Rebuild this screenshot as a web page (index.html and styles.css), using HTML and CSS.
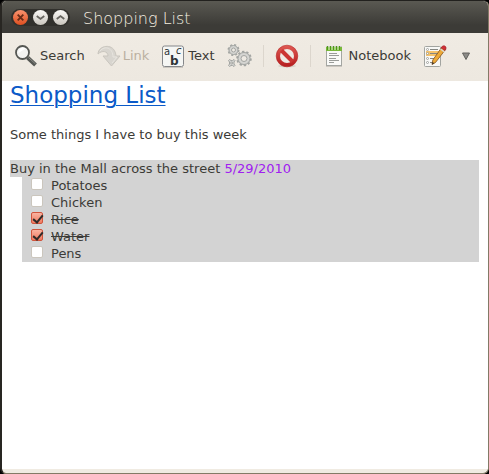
FILE: index.html
```
<!DOCTYPE html>
<html lang="en">
<head>
<meta charset="utf-8">
<title>Shopping List</title>
<link rel="stylesheet" href="styles.css">
</head>
<body>
<div class="window">
  <header class="titlebar">
    <div class="controls">
      <button class="control close" type="button" aria-label="Close"><svg viewBox="0 0 16 16"><path d="M5 5l6 6M11 5l-6 6"/></svg></button>
      <button class="control" type="button" aria-label="Minimize"><svg viewBox="0 0 16 16"><path d="M4 6.500L8 9.500l4-3"/></svg></button>
      <button class="control" type="button" aria-label="Maximize"><svg viewBox="0 0 16 16"><path d="M4 9.500L8 6.500l4 3"/></svg></button>
    </div>
    <span class="caption">Shopping List</span>
  </header>
  <nav class="toolbar">
    <button class="tool" type="button">
      <svg class="icon" viewBox="0 0 24 24"><path d="M13.500 13.500l8 7.500" stroke="#555753" stroke-width="4"/><path d="M14.500 13.500l7 6.500" stroke="#8b8d88" stroke-width="1"/><circle cx="8.500" cy="8.500" r="6.500" fill="#f3f3f1" stroke="#555753" stroke-width="1.800"/><path d="M4.500 9a4.500 4.500 0 0 1 7-4.500z" fill="#fff"/></svg>
      <span>Search</span>
    </button>
    <button class="tool link-tool" type="button" disabled>
      <svg class="icon" viewBox="0 0 24 24"><path d="M1 10C1 1 18-2 19 12h4l-8.500 10L6 12h5C11 7 5 6 1 10z" fill="#d8d5cf" stroke="#c9c5be"/><path d="M3 7c5-6 13-3 13 6h4l-5 6" fill="none" stroke="#e8e5df"/></svg>
      <span>Link</span>
    </button>
    <button class="tool text-tool" type="button">
      <svg class="icon" viewBox="0 0 24 24"><rect x="1.500" y="2" width="21" height="20.500" rx="2" fill="#f5f6f4" stroke="#85878a"/><path d="M2 23.500h20" stroke="#cbc7c0"/><text class="glyph" x="3" y="11">a</text><text class="glyph slanted" x="15" y="10">c</text><text class="glyph strong" x="9" y="21">b</text></svg>
      <span>Text</span>
    </button>
    <button class="tool gears" type="button" aria-label="Tools">
      <svg class="icon wide" viewBox="0 0 26 26"><g fill="#d5d5d2" stroke="#a3a5a2"><circle cx="7.500" cy="7" r="5" stroke-width="2" stroke-dasharray="2 1.930"/><circle cx="7.500" cy="7" r="4.500"/><circle cx="18" cy="15.500" r="6.800" stroke-width="2" stroke-dasharray="2.300 1.970"/><circle cx="18" cy="15.500" r="6"/><path d="M2.500 17.500l1-1 1.500 1h1.500l1.500-1 1 1-1 1.500v2l1 1.500-1 1-1.500-1H5l-1.500 1-1-1 1-1.500v-2z"/></g><g fill="#eeeae3" stroke="#a3a5a2"><circle cx="7.500" cy="7" r="2"/><circle cx="18" cy="15.500" r="3"/><circle cx="5.700" cy="20" r="1"/></g></svg>
    </button>
    <span class="separator"></span>
    <button class="tool" type="button" aria-label="Delete note">
      <svg class="icon" viewBox="0 0 24 24"><defs><linearGradient id="red" x2="0" y2="1"><stop stop-color="#e05a54"/><stop offset="1" stop-color="#b51c1e"/></linearGradient></defs><ellipse cx="12" cy="22" rx="9" ry="1.500" fill="#d8d2c9"/><circle cx="12" cy="12" r="10.800" fill="url(#red)" stroke="#b72b2b" stroke-width=".6"/><circle cx="12" cy="12" r="7" fill="#eeeae4"/><path d="M6.500 6.500l11 11" stroke="#cb3533" stroke-width="4"/></svg>
    </button>
    <span class="separator"></span>
    <button class="tool notebook" type="button">
      <svg class="icon" viewBox="0 0 24 24"><path d="M4 22h16" stroke="#a9a6a0"/><rect x="4.500" y="3" width="15" height="18.500" fill="#fafaf8" stroke="#a4a6a2"/><path d="M4 3h16v4H4z" fill="#79b93a"/><path d="M5.500 2v4M8.500 2v4M11.500 2v4M14.500 2v4M17.500 2v4" stroke="#4f9718"/><path d="M7 3v3M10 3v3M13 3v3M16 3v3" stroke="#d8edbd"/><path d="M7 9.500h8M7 11.500h10M7 14.500h7M7 16.500h10M7 18.500h5" stroke="#9a9c99"/></svg>
      <span>Notebook</span>
    </button>
    <button class="tool edit" type="button" aria-label="Edit tasks">
      <svg class="icon" viewBox="0 0 24 24"><rect x="1.500" y="2.500" width="16" height="20" rx="1" fill="#f8f8f6" stroke="#a2a4a0"/><path d="M3 7h13v5H3z" fill="#f6c36b"/><path d="M7 5.500h8M7 9.500h8M7 14.500h5M7 18.500h4" stroke="#858783"/><g fill="#fff" stroke="#92948f" stroke-width=".8"><circle cx="4.500" cy="5.500" r="1"/><circle cx="4.500" cy="9.500" r="1"/><circle cx="4.500" cy="14.500" r="1"/><circle cx="4.500" cy="18.500" r="1"/></g><path d="M19 3l3.500 2.500-10 13-3.500 2 .8-4.500z" fill="#edaa38" stroke="#81501d" stroke-width=".8"/><path d="M18 4l1.500-2q2-1 3.500 1v2l-1 1.500z" fill="#cf3038" stroke="#9f252a" stroke-width=".6"/><path d="M17.500 5l4 3" stroke="#d9dad5" stroke-width="1.500"/><path d="M9 20.500l.5-2.500 1.800 1.200z" fill="#34302b"/></svg>
    </button>
    <button class="tool more" type="button" aria-label="More"><svg viewBox="0 0 10 10"><path d="M1.500 2h7L5 8.500z" fill="#8c8b87" stroke="#62615d"/></svg></button>
  </nav>
  <main class="note">
    <h1>Shopping List</h1>
    <p class="intro">Some things I have to buy this week</p>
    <p class="task">Buy in the Mall across the street <time datetime="2010-05-29">5/29/2010</time></p>
    <ul class="items">
      <li><label><input type="checkbox"><span>Potatoes</span></label></li>
      <li><label><input type="checkbox"><span>Chicken</span></label></li>
      <li><label><input type="checkbox" checked><span>Rice</span></label></li>
      <li><label><input type="checkbox" checked><span>Water</span></label></li>
      <li><label><input type="checkbox"><span>Pens</span></label></li>
    </ul>
  </main>
</div>
</body>
</html>
```
FILE: styles.css
```
* { box-sizing: border-box; }

body {
  margin: 0;
  background: #000;
  color: #3c3b37;
  font: 13px/17px "DejaVu Sans", sans-serif;
}

.window {
  display: flex;
  flex-direction: column;
  min-height: 100vh;
  border: 1px solid #837a66;
  border-top-color: #22211e;
  border-left: 2px solid #282622;
  border-radius: 6px;
  background: #f0ebe2;
  overflow: hidden;
}

button {
  padding: 0;
  border: 0;
  background: none;
  color: inherit;
  font: inherit;
}

svg { display: block; flex: none; fill: none; }

.titlebar {
  display: flex;
  align-items: center;
  gap: 12px;
  height: 32px;
  padding-left: 9px;
  background: linear-gradient(#5a5952, #3c3b37 75%);
}

.controls {
  display: flex;
  gap: 5px;
  padding: 1px 2px;
  border-radius: 10px;
  background: #31302c;
}

.control {
  width: 15px;
  height: 15px;
  border-radius: 50%;
  background: linear-gradient(#fbfaf8, #c9c5bd);
}

.control svg { width: 15px; height: 15px; stroke: #66645f; stroke-width: 2; }

.close { background: linear-gradient(#f9936f, #df4f20); }
.close svg { stroke: #662c18; }

.caption {
  padding: 3px 0 0 1px;
  color: #f4eee0;
  font: 200 16px/22px "DejaVu Sans Light", "DejaVu Sans", sans-serif;
}

.toolbar {
  display: flex;
  align-items: center;
  height: 48px;
  padding: 0 16px 2px 12px;
  background: linear-gradient(#f0ebe3, #ede8e0);
}

.tool { display: flex; align-items: center; gap: 2px; }
.tool span { padding-bottom: 2px; }
.icon { width: 24px; height: 24px; }
.wide { width: 26px; height: 26px; }
.link-tool { margin-left: 12px; color: #bbb0a0; }
.text-tool { margin-left: 12px; }
.text-tool, .notebook { gap: 3px; }
.gears { margin-left: 11px; }
.edit { margin-left: 12px; }
.more { margin-left: 14px; }
.more svg { width: 10px; height: 10px; }

.glyph { fill: #2e3436; font: 10px "DejaVu Sans", sans-serif; }
.slanted { font-style: italic; }
.strong { font-size: 12px; font-weight: bold; }

.separator {
  width: 1px;
  height: 22px;
  margin: 0 11px;
  background: #dcd6cd;
}

.note {
  flex: 1;
  margin-bottom: 4px;
  padding: 0 9px 0 8px;
  background: #fff;
}

h1 {
  margin: 0;
  color: #0b5ac8;
  font-size: 23px;
  font-weight: normal;
  line-height: 28px;
  text-decoration: underline;
  text-decoration-thickness: 1px;
  text-underline-offset: 2px;
}

.intro { margin: 17px 0; }
.task { margin: 0; background: #d3d3d3; }
.task time { color: #a020f0; }

.items {
  margin: 0 0 0 12px;
  padding: 0 0 0 9px;
  background: #d3d3d3;
  list-style: none;
}

.items label { display: flex; gap: 8px; }

.items input {
  appearance: none;
  width: 12px;
  height: 12px;
  margin: 1px 0;
  border: 1px solid #cbc6bd;
  border-radius: 2px;
  background: #fff;
}

.items input:checked {
  border-color: #d0543c;
  background: linear-gradient(#f9b3a0, #f07a60);
}

.items input:checked::before {
  content: "";
  display: block;
  width: 4px;
  height: 8px;
  margin-left: 3px;
  border: solid #2f2b28;
  border-width: 0 2px 2px 0;
  transform: rotate(40deg);
}

.items input:checked + span { text-decoration: line-through; }
```
